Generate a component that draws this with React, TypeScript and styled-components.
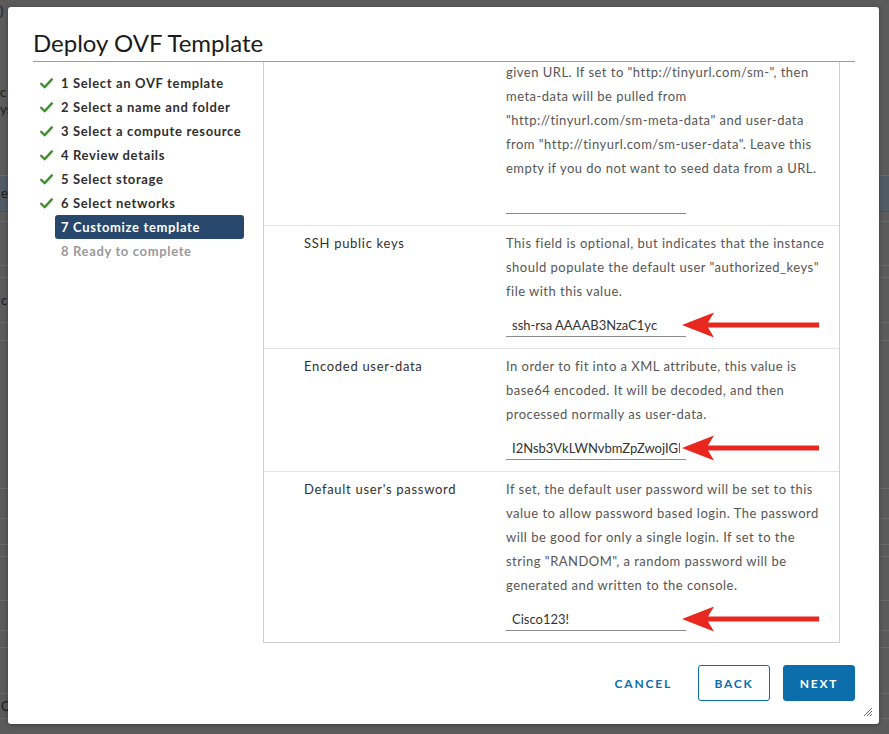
import React from "react";
import styled, { createGlobalStyle, css } from "styled-components";

const GlobalStyle = createGlobalStyle`
  html, body { margin: 0; padding: 0; }
  body {
    background: #5b5b5b;
    font-family: Lato, "Liberation Sans", sans-serif;
    width: 889px;
    height: 734px;
    overflow: hidden;
  }
  * { box-sizing: border-box; }
`;

const Page = styled.div`
  position: relative;
  width: 889px;
  height: 734px;
  overflow: hidden;
  background: #5b5b5b;
`;

const BgList = styled.div`
  display: flex;
  flex-direction: column;
`;

const BgRow = styled.div<{ $h: number; $band?: boolean }>`
  height: ${(p) => p.$h}px;
  flex: none;
  border-bottom: 1px solid ${(p) => (p.$band ? "#2f5873" : "#6a6a6a")};
  background: ${(p) => (p.$band ? "#505c64" : "transparent")};
  display: flex;
  flex-direction: column;
  justify-content: center;
  font-size: 13px;
  color: #1e1e1e;
  padding-left: 1px;
`;

const BgText = styled.span<{ $mt?: number }>`
  display: block;
  line-height: 17px;
  margin-top: ${(p) => p.$mt ?? 0}px;
  color: #1c1c1c;
`;

const BgTop = styled.div`
  display: flex;
  flex-direction: column;
  height: 176px;
  border-bottom: 1px solid #6a6a6a;
  font-size: 13px;
`;

const Modal = styled.div`
  position: absolute;
  left: 8px;
  top: 7px;
  width: 871px;
  height: 717px;
  background: #ffffff;
  border-radius: 3px;
  box-shadow: 0 1px 4px rgba(0, 0, 0, 0.35);
  display: flex;
  flex-direction: column;
`;

const Header = styled.div`
  margin: 0 24px 0 25px;
  padding: 20px 0 2px;
  border-bottom: 1px solid #9c9c9c;
`;

const Title = styled.h2`
  margin: 0;
  font-family: Lato, "Liberation Sans", sans-serif;
  font-size: 24px;
  line-height: 32px;
  font-weight: 400;
  color: #1b1b1b;
`;

const Body = styled.div`
  display: flex;
  margin: 0 39px 0 25px;
  height: 581px;
  flex: none;
`;

const Sidebar = styled.nav`
  width: 230px;
  flex: none;
  padding-top: 9px;
  display: flex;
  flex-direction: column;
`;

const Step = styled.div`
  display: flex;
  align-items: center;
  height: 24px;
`;

const CheckSlot = styled.span`
  width: 22px;
  flex: none;
  display: flex;
  align-items: center;
  padding-left: 7px;
`;

const StepLabel = styled.span<{ $state: "done" | "active" | "todo" }>`
  width: 189px;
  height: 24px;
  line-height: 24px;
  padding: 0 6px;
  border-radius: 3px;
  font-size: 13px;
  font-weight: 700;
  letter-spacing: 0.65px;
  white-space: nowrap;
  ${(p) =>
    p.$state === "active"
      ? css`
          background: #27486c;
          color: #ffffff;
        `
      : p.$state === "todo"
      ? css`
          color: #9a9a9a;
        `
      : css`
          color: #2f2f2f;
        `}
`;

const Panel = styled.div`
  width: 577px;
  flex: none;
  border: 1px solid #cfcfcf;
  border-top: none;
  overflow: hidden;
  display: flex;
  flex-direction: column;
`;

const Row = styled.div<{ $clipped?: boolean }>`
  display: grid;
  grid-template-columns: 242px 1fr;
  padding: 5px 0 11px;
  border-bottom: 1px solid #e4e4e4;
  flex: none;
  ${(p) =>
    p.$clipped &&
    css`
      margin-top: -7px;
    `}
  &:last-child {
    border-bottom: none;
  }
`;

const Label = styled.div`
  padding-left: 40px;
  font-size: 13px;
  line-height: 24px;
  letter-spacing: 0.7px;
  color: #313131;
`;

const Cell = styled.div`
  display: flex;
  flex-direction: column;
`;

const Desc = styled.div`
  font-size: 13px;
  line-height: 24px;
  letter-spacing: 0.48px;
  color: #565656;
  white-space: nowrap;
`;

const Field = styled.div`
  position: relative;
  width: 180px;
  height: 24px;
  margin-top: 10px;
`;

const TextInput = styled.input`
  width: 100%;
  height: 24px;
  border: none;
  border-bottom: 1px solid #8c8c8c;
  padding: 0 6px;
  font-family: Lato, "Liberation Sans", sans-serif;
  font-size: 13px;
  color: #333333;
  background: transparent;
  outline: none;
`;

const ArrowMark = styled.svg`
  position: absolute;
  left: 176px;
  top: -1px;
  width: 137px;
  height: 26px;
`;

const Footer = styled.div`
  display: flex;
  justify-content: flex-end;
  align-items: center;
  gap: 13px;
  padding: 22px 24px 0 0;
`;

const Button = styled.button<{ $variant: "flat" | "outline" | "primary" }>`
  height: 36px;
  min-width: 72px;
  padding: 0 12px;
  border-radius: 3px;
  font-family: Lato, "Liberation Sans", sans-serif;
  font-size: 12px;
  font-weight: 700;
  letter-spacing: 0.15em;
  text-transform: uppercase;
  cursor: pointer;
  ${(p) =>
    p.$variant === "primary"
      ? css`
          background: #0b6eaa;
          border: 1px solid #0b6eaa;
          color: #ffffff;
        `
      : p.$variant === "outline"
      ? css`
          background: #ffffff;
          border: 1px solid #0b6eaa;
          color: #0b6eaa;
        `
      : css`
          background: transparent;
          border: 1px solid transparent;
          color: #0b6eaa;
        `}
`;

const Resize = styled.svg`
  position: absolute;
  right: 6px;
  bottom: 7px;
  width: 10px;
  height: 10px;
`;

const Check = () => (
  <svg width="13" height="11" viewBox="0 0 13 11">
    <path d="M1.2 5.8 L4.6 9.2 L11.8 1.4" fill="none" stroke="#3b8c26" strokeWidth="2.3" strokeLinecap="round" strokeLinejoin="round" />
  </svg>
);

const Arrow = () => (
  <ArrowMark viewBox="0 0 137 26">
    <polygon points="0,13 32,0.5 26,10.5 137,10.5 137,15.5 26,15.5 32,25.5" fill="#e8271e" />
  </ArrowMark>
);

const steps: { label: string; state: "done" | "active" | "todo" }[] = [
  { label: "1 Select an OVF template", state: "done" },
  { label: "2 Select a name and folder", state: "done" },
  { label: "3 Select a compute resource", state: "done" },
  { label: "4 Review details", state: "done" },
  { label: "5 Select storage", state: "done" },
  { label: "6 Select networks", state: "done" },
  { label: "7 Customize template", state: "active" },
  { label: "8 Ready to complete", state: "todo" },
];

type RowData = {
  label: string;
  lines: string[];
  value: string;
  arrow: boolean;
  clipped?: boolean;
};

const rows: RowData[] = [
  {
    label: "",
    clipped: true,
    lines: [
      'given URL. If set to "http://tinyurl.com/sm-", then',
      "meta-data will be pulled from",
      '"http://tinyurl.com/sm-meta-data" and user-data',
      'from "http://tinyurl.com/sm-user-data". Leave this',
      "empty if you do not want to seed data from a URL.",
    ],
    value: "",
    arrow: false,
  },
  {
    label: "SSH public keys",
    lines: [
      "This field is optional, but indicates that the instance",
      'should populate the default user "authorized_keys"',
      "file with this value.",
    ],
    value: "ssh-rsa AAAAB3NzaC1yc",
    arrow: true,
  },
  {
    label: "Encoded user-data",
    lines: [
      "In order to fit into a XML attribute, this value is",
      "base64 encoded. It will be decoded, and then",
      "processed normally as user-data.",
    ],
    value: "I2Nsb3VkLWNvbmZpZwojIGNsb3VkLWluaXQ=",
    arrow: true,
  },
  {
    label: "Default user's password",
    lines: [
      "If set, the default user password will be set to this",
      "value to allow password based login. The password",
      "will be good for only a single login. If set to the",
      'string "RANDOM", a random password will be',
      "generated and written to the console.",
    ],
    value: "Cisco123!",
    arrow: true,
  },
];

const bgRows: { h: number; band?: boolean; text?: string }[] = [
  { h: 36, band: true, text: "e" },
  { h: 10 },
  { h: 44 },
  { h: 12 },
  { h: 45, text: "c" },
  { h: 18 },
  { h: 148 },
  { h: 30 },
  { h: 26 },
  { h: 12 },
  { h: 44 },
  { h: 30 },
  { h: 17 },
  { h: 46 },
  { h: 25, text: "Qu" },
];

export default function App() {
  return (
    <Page>
      <GlobalStyle />
      <BgList>
        <BgTop>
          <BgText $mt={3}>)</BgText>
          <BgText $mt={64}>c</BgText>
          <BgText>ys</BgText>
        </BgTop>
        {bgRows.map((r, i) => (
          <BgRow key={i} $h={r.h} $band={r.band}>
            {r.text ? <BgText>{r.text}</BgText> : null}
          </BgRow>
        ))}
      </BgList>

      <Modal>
        <Header>
          <Title>Deploy OVF Template</Title>
        </Header>
        <Body>
          <Sidebar>
            {steps.map((s) => (
              <Step key={s.label}>
                <CheckSlot>{s.state === "done" ? <Check /> : null}</CheckSlot>
                <StepLabel $state={s.state}>{s.label}</StepLabel>
              </Step>
            ))}
          </Sidebar>
          <Panel>
            {rows.map((r, i) => (
              <Row key={i} $clipped={r.clipped}>
                <Label>{r.label}</Label>
                <Cell>
                  {r.lines.map((l) => (
                    <Desc key={l}>{l}</Desc>
                  ))}
                  <Field>
                    <TextInput readOnly value={r.value} />
                    {r.arrow ? <Arrow /> : null}
                  </Field>
                </Cell>
              </Row>
            ))}
          </Panel>
        </Body>
        <Footer>
          <Button $variant="flat">Cancel</Button>
          <Button $variant="outline">Back</Button>
          <Button $variant="primary">Next</Button>
        </Footer>
        <Resize viewBox="0 0 10 10">
          <path d="M9 1 L1 9 M9 4 L4 9 M9 7 L7 9" stroke="#6b6b6b" strokeWidth="1" />
        </Resize>
      </Modal>
    </Page>
  );
}
